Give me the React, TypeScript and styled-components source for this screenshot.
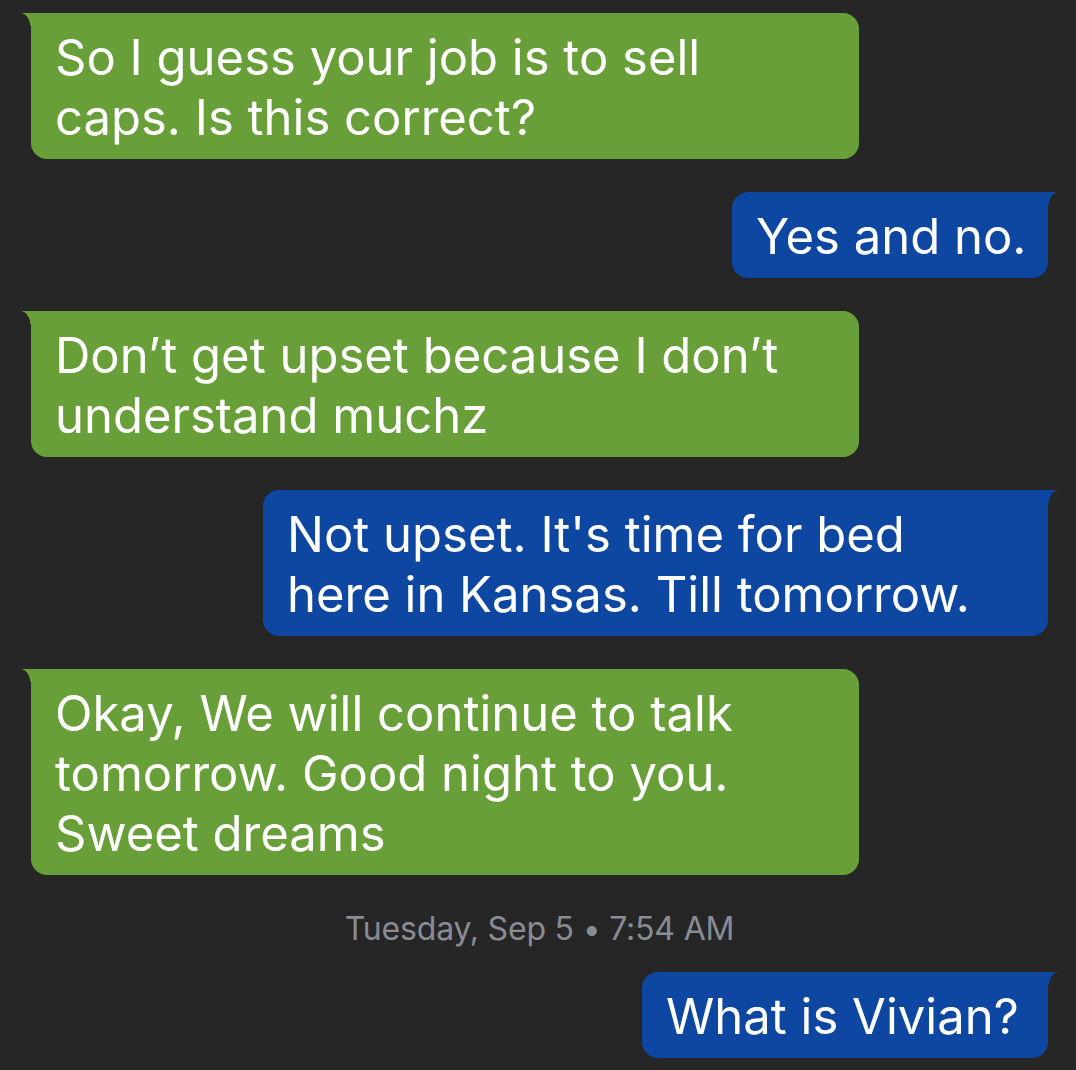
import React from "react";
import styled, { createGlobalStyle } from "styled-components";

const GlobalStyle = createGlobalStyle`
  html, body {
    margin: 0;
    padding: 0;
    background: #262626;
  }
  body {
    font-family: "Inter", "Noto Sans", sans-serif;
  }
`;

const Thread = styled.div`
  display: flex;
  flex-direction: column;
  gap: 33px;
  padding: 13px 28px 12px 31px;
  background: #262626;
  min-height: 1045px;
`;

const Row = styled.div<{ $out: boolean }>`
  display: flex;
  justify-content: ${(p) => (p.$out ? "flex-end" : "flex-start")};
`;

const Bubble = styled.div<{ $out: boolean }>`
  position: relative;
  box-sizing: border-box;
  padding: 15px 24px 11px 24px;
  background: ${(p) => (p.$out ? "#0d47a1" : "#689f38")};
  color: #ffffff;
  font-family: "Inter", "Noto Sans", sans-serif;
  font-size: 49px;
  line-height: 60px;
  letter-spacing: 0;
  white-space: nowrap;
  border-radius: ${(p) => (p.$out ? "16px 0 16px 16px" : "0 16px 16px 16px")};

  &::before {
    content: "";
    position: absolute;
    top: 0;
    ${(p) => (p.$out ? "right: -10px;" : "left: -10px;")}
    width: 10px;
    height: 17px;
    background: radial-gradient(
      ellipse 10px 17px at ${(p) => (p.$out ? "100% 100%" : "0 100%")},
      transparent 97%,
      ${(p) => (p.$out ? "#0d47a1" : "#689f38")} 100%
    );
  }
`;

const Stamp = styled.div`
  text-align: center;
  color: #898c94;
  font-family: "Inter", "Noto Sans", sans-serif;
  font-size: 32px;
  line-height: 36px;
  letter-spacing: -0.2px;
  margin: 3px 0 -8px;
`;

type Msg =
  | { kind: "msg"; out: boolean; width: number; lines: string[] }
  | { kind: "stamp"; text: string };

const messages: Msg[] = [
  { kind: "msg", out: false, width: 828, lines: ["So I guess your job is to sell", "caps. Is this correct?"] },
  { kind: "msg", out: true, width: 316, lines: ["Yes and no."] },
  { kind: "msg", out: false, width: 828, lines: ["Don\u2019t get upset because I don\u2019t", "understand muchz"] },
  { kind: "msg", out: true, width: 785, lines: ["Not upset. It's time for bed", "here in Kansas. Till tomorrow."] },
  {
    kind: "msg",
    out: false,
    width: 828,
    lines: ["Okay, We will continue to talk", "tomorrow. Good night to you.", "Sweet dreams"],
  },
  { kind: "stamp", text: "Tuesday, Sep 5 \u2022 7:54 AM" },
  { kind: "msg", out: true, width: 406, lines: ["What is Vivian?"] },
];

export default function App() {
  return (
    <>
      <GlobalStyle />
      <Thread>
        {messages.map((m, i) =>
          m.kind === "stamp" ? (
            <Stamp key={i}>{m.text}</Stamp>
          ) : (
            <Row key={i} $out={m.out}>
              <Bubble $out={m.out} style={{ width: m.width }}>
                {m.lines.map((l, j) => (
                  <React.Fragment key={j}>
                    {j > 0 && <br />}
                    {l}
                  </React.Fragment>
                ))}
              </Bubble>
            </Row>
          )
        )}
      </Thread>
    </>
  );
}
